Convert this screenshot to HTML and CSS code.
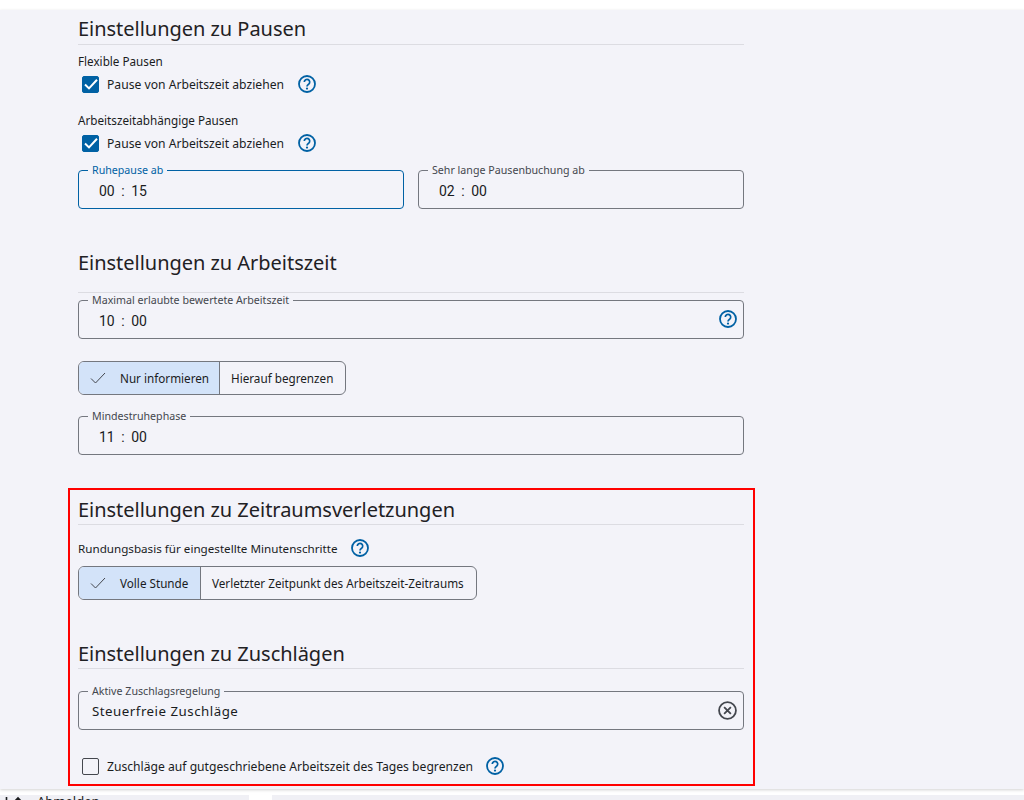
FILE: index.html
```html
<!DOCTYPE html>
<html lang="de">
<head>
<meta charset="utf-8">
<title>Einstellungen</title>
<link rel="stylesheet" href="styles.css">
</head>
<body>
<svg class="defs" width="0" height="0" aria-hidden="true">
  <symbol id="help" viewBox="0 0 18 18">
    <circle cx="9" cy="9" r="8" fill="none" stroke="currentColor" stroke-width="1.8"/>
    <path d="M6.3 7a2.7 2.7 0 1 1 4.3 2.2C9.6 9.9 9 10.3 9 11.4" fill="none" stroke="currentColor" stroke-width="1.7"/>
    <circle cx="9" cy="13.6" r="1.1" fill="currentColor"/>
  </symbol>
  <symbol id="tick" viewBox="0 0 18 18">
    <path d="M3 9.5l4 3.9 8-8.6" fill="none" stroke="#fff" stroke-width="2"/>
  </symbol>
  <symbol id="check" viewBox="0 0 16 12">
    <path d="M1 6.5l4.5 4.5L15 1" fill="none" stroke="#44474e" stroke-width="1"/>
  </symbol>
</svg>
<div class="page">
  <main class="content">
    <section class="sec-pausen">
      <h2 class="title">Einstellungen zu Pausen</h2>
      <div class="group-label">Flexible Pausen</div>
      <div class="check-row">
        <span class="box on"><svg width="18" height="18"><use href="#tick"/></svg></span>
        <span>Pause von Arbeitszeit abziehen</span>
        <svg class="help" width="18" height="18"><use href="#help"/></svg>
      </div>
      <div class="group-label second">Arbeitszeitabhängige Pausen</div>
      <div class="check-row">
        <span class="box on"><svg width="18" height="18"><use href="#tick"/></svg></span>
        <span>Pause von Arbeitszeit abziehen</span>
        <svg class="help" width="18" height="18"><use href="#help"/></svg>
      </div>
      <div class="two-col">
        <div class="field focus"><span class="field-label">Ruhepause ab</span><span class="time"><span>00</span><span>:</span><span>15</span></span></div>
        <div class="field"><span class="field-label">Sehr lange Pausenbuchung ab</span><span class="time"><span>02</span><span>:</span><span>00</span></span></div>
      </div>
    </section>

    <section class="sec-arbeit">
      <h2 class="title tall">Einstellungen zu Arbeitszeit</h2>
      <div class="field after-tall"><span class="field-label">Maximal erlaubte bewertete Arbeitszeit</span><span class="time"><span>10</span><span>:</span><span>00</span></span>
        <svg class="help end" width="18" height="18"><use href="#help"/></svg>
      </div>
      <div class="toggle t-one">
        <span class="opt sel w-nur"><svg width="16" height="12"><use href="#check"/></svg><span>Nur informieren</span></span>
        <span class="opt">Hierauf begrenzen</span>
      </div>
      <div class="field mind"><span class="field-label">Mindestruhephase</span><span class="time"><span>11</span><span>:</span><span>00</span></span></div>
    </section>

    <section class="sec-zeitraum">
      <h2 class="title short">Einstellungen zu Zeitraumsverletzungen</h2>
      <div class="label-row">
        <span>Rundungsbasis für eingestellte Minutenschritte</span>
        <svg class="help" width="18" height="18"><use href="#help"/></svg>
      </div>
      <div class="toggle t-two">
        <span class="opt sel w-voll"><svg width="16" height="12"><use href="#check"/></svg><span>Volle Stunde</span></span>
        <span class="opt">Verletzter Zeitpunkt des Arbeitszeit-Zeitraums</span>
      </div>
    </section>

    <section class="sec-zuschlag">
      <h2 class="title short">Einstellungen zu Zuschlägen</h2>
      <div class="field select"><span class="field-label">Aktive Zuschlagsregelung</span><span class="value">Steuerfreie Zuschläge</span>
        <svg class="clear" width="19" height="19" viewBox="0 0 18 18">
          <circle cx="9" cy="9" r="8" fill="none" stroke="#44474e" stroke-width="1.7"/>
          <path d="M5.8 5.8l6.4 6.4M12.2 5.8l-6.4 6.4" stroke="#44474e" stroke-width="1.7"/>
        </svg>
      </div>
      <div class="check-row last">
        <span class="box"></span>
        <span>Zuschläge auf gutgeschriebene Arbeitszeit des Tages begrenzen</span>
        <svg class="help" width="18" height="18"><use href="#help"/></svg>
      </div>
    </section>
  </main>
  <div class="highlight"></div>
</div>
<footer class="bottom">
  <svg class="logout-icon" width="18" height="16" viewBox="0 0 18 16">
    <path d="M1.5 1v14M9 6l4-4 4 4M13 2v12" fill="none" stroke="#1a1c1e" stroke-width="1.6"/>
  </svg>
  <span class="logout">Abmelden</span><span class="white-gap"></span>
</footer>
</body>
</html>
```
FILE: styles.css
```css
* { box-sizing: border-box; }
html, body { margin: 0; height: 800px; overflow: hidden; }
body {
  background: #fff;
  font-family: "Noto Sans", "Open Sans", sans-serif;
  font-size: 12px;
  color: #1a1c1e;
  display: flex;
  flex-direction: column;
}
.defs { position: absolute; }
.page {
  position: relative;
  margin-top: 10px;
  height: 779px;
  background: #f3f3f9;
  box-shadow: 0 1px 3px rgba(0,0,0,.18);
  flex: none;
}
.content { width: 744px; padding-left: 78px; }
.title {
  margin: 0;
  height: 35px;
  padding-top: 5px;
  font-size: 20px;
  line-height: 28px;
  font-weight: 400;
  letter-spacing: -.03px;
  border-bottom: 1px solid #dcdce2;
  color: #1f2124;
}
.title.tall { height: 48px; padding-top: 4px; }
.title.short { height: 34px; padding-top: 5px; }
.sec-zuschlag .title.short { height: 33px; padding-top: 4px; }
.group-label { height: 17px; line-height: 17px; margin-top: 8px; font-size: 11.7px; }
.group-label.second { margin-top: 16px; }
.check-row { display: flex; align-items: center; height: 24px; margin-top: 2px; padding-left: 4px; font-size: 12.15px; }
.box {
  width: 17px; height: 17px; margin-right: 8px; flex: none;
  border: 1px solid #44474e; border-radius: 2px;
  display: flex; align-items: center; justify-content: center;
}
.box.on { background: #0061a4; border-color: #0061a4; }
.box svg { flex: none; }
.help { color: #0061a4; margin-left: 14px; flex: none; }
.two-col { display: grid; grid-template-columns: 326px 326px; gap: 14px; margin-top: 15px; }
.field {
  position: relative;
  height: 39px;
  border: 1px solid #74777f;
  border-radius: 4px;
  padding: 0 13px;
  display: flex;
  align-items: center;
}
.field.focus { border-color: #0061a4; }
.field-label {
  position: absolute;
  left: 9px; top: -7px;
  padding: 0 4px;
  font-size: 10.66px;
  line-height: 13px;
  background: #f3f3f9;
  color: #44474e;
  white-space: nowrap;
}
.focus .field-label { color: #0061a4; }
.time { display: inline-flex; gap: 6.5px; padding-left: 7px; font-size: 14px; font-family: Roboto, sans-serif; padding-top: 2px; }
.value { font-size: 13.3px; letter-spacing: .5px; padding-top: 1px; }
.end { position: absolute; right: 6px; top: 9px; margin: 0; }
.sec-arbeit { margin-top: 36px; }
.after-tall { margin-top: 7px; }
.toggle {
  display: flex;
  height: 34px;
  border: 1px solid #74777f;
  border-radius: 6px;
  overflow: hidden;
  font-size: 11.7px;
}
.t-one { margin-top: 22px; width: 268px; }
.t-two { margin-top: 6px; width: 399px; }
.opt { display: flex; align-items: center; padding: 0 11px; white-space: nowrap; flex: none; }
.opt + .opt { border-left: 1px solid #74777f; }
.opt svg { flex: none; }
.opt.sel { background: #d3e3f9; gap: 14px; padding-right: 0; }
.w-nur { width: 140px; }
.w-voll { width: 121px; }
.mind { margin-top: 21px; }
.sec-zeitraum { margin-top: 36px; }
.label-row { display: flex; align-items: center; height: 24px; margin-top: 11px; font-size: 11.65px; }
.label-row .help { margin-left: 13px; }
.sec-zuschlag { margin-top: 36px; }
.select { margin-top: 22px; }
.clear { position: absolute; right: 6px; top: 9px; }
.check-row.last { margin-top: 24px; }
.check-row.last .help { margin-left: 13px; }
.highlight {
  position: absolute;
  left: 68px; top: 478px;
  width: 687px; height: 298px;
  border: 2px solid #f00;
  pointer-events: none;
}
.bottom {
  flex: 1;
  margin-top: 6px;
  background: #f0f0f5;
  overflow: hidden;
  position: relative;
  display: flex;
}
.logout-icon { position: absolute; left: 5px; top: 1px; }
.logout { position: absolute; left: 37px; top: -2px; font-size: 13px; color: #1a1c1e; line-height: 16px; }
.white-gap { position: absolute; left: 249px; top: 0; width: 23px; height: 6px; background: #fff; }
```
